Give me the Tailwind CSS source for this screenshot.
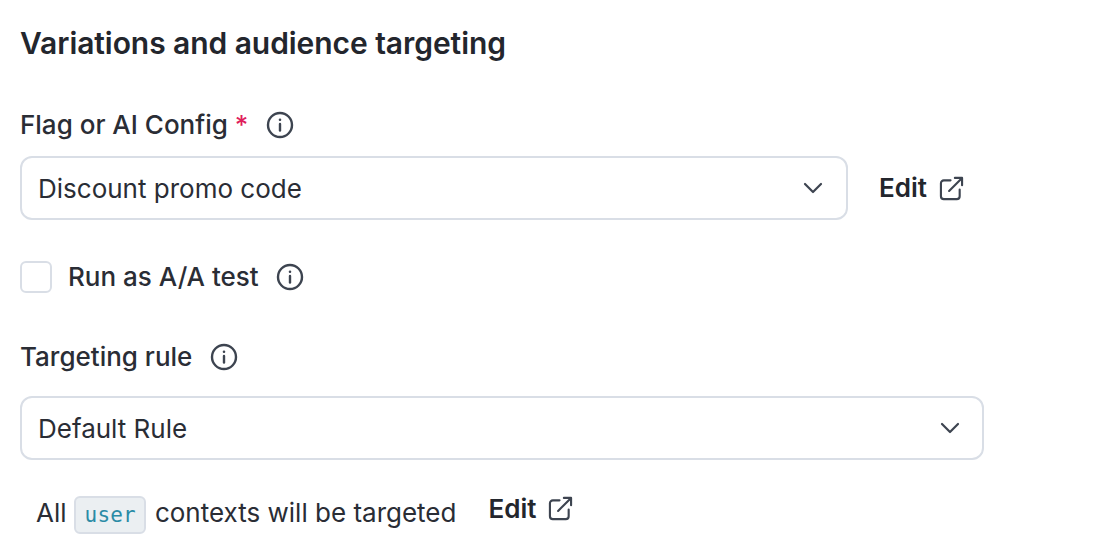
<!DOCTYPE html>
<html><head><meta charset="utf-8"><script src="https://cdn.jsdelivr.net/npm/@tailwindcss/browser@4"></script></head>
<body class="bg-white">
<div class="w-[1106px] h-[548px] overflow-hidden pl-[20px] pt-[23px] font-['Inter',sans-serif] text-[#2a2d35] text-[26px] leading-[40px]">
  <h2 class="text-[30px] font-semibold leading-[40px] tracking-[-0.06px] text-[#23262d]">Variations and audience targeting</h2>
  <div class="mt-[42px] flex items-center h-[40px]">
    <span class="font-[450]">Flag or AI Config</span>
    <span class="text-[#df1f5c] ml-[7px] font-medium">*</span>
    <svg class="ml-[18px]" width="28" height="28" viewBox="0 0 28 28" fill="none" stroke="#3d4450" stroke-width="2.4" stroke-linecap="round"><circle cx="14" cy="14" r="12"/><path d="M14 13v6.500"/><circle cx="14" cy="8.800" r="0.600" fill="#3d4450" stroke-width="1.400"/></svg>
  </div>
  <div class="mt-[11px] flex items-center">
    <div class="w-[828px] h-[64px] border-2 border-[#d9dee6] rounded-[12px] flex items-center justify-between pl-[16px] pr-[23px]">
      <span class="mt-[2px]">Discount promo code</span>
      <svg width="20" height="12" viewBox="0 0 20 12" fill="none" stroke="#3d4450" stroke-width="2.2" stroke-linecap="round" stroke-linejoin="round"><path d="M2 2l8 8 8-8"/></svg>
    </div>
    <span class="ml-[31px] font-semibold text-[#23262d]">Edit</span>
    <svg class="ml-[12px]" width="25" height="25" viewBox="0 0 26 26" fill="none" stroke="#3d4450" stroke-width="2.2" stroke-linecap="round" stroke-linejoin="round"><path d="M12 4.500H5a3 3 0 0 0-3 3V21a3 3 0 0 0 3 3h13.500a3 3 0 0 0 3-3v-7"/><path d="M10.500 15.500L24 2M16.500 2H24v7.500"/></svg>
  </div>
  <div class="mt-[40px] flex items-center h-[34px]">
    <span class="w-[32px] h-[32px] border-2 border-[#d9dee6] rounded-[6px]"></span>
    <span class="ml-[16px] font-[450]">Run as A/A test</span>
    <svg class="ml-[17px]" width="28" height="28" viewBox="0 0 28 28" fill="none" stroke="#3d4450" stroke-width="2.4" stroke-linecap="round"><circle cx="14" cy="14" r="12"/><path d="M14 13v6.500"/><circle cx="14" cy="8.800" r="0.600" fill="#3d4450" stroke-width="1.400"/></svg>
  </div>
  <div class="mt-[43px] flex items-center h-[40px]">
    <span class="font-[450]">Targeting rule</span>
    <svg class="ml-[18px]" width="28" height="28" viewBox="0 0 28 28" fill="none" stroke="#3d4450" stroke-width="2.4" stroke-linecap="round"><circle cx="14" cy="14" r="12"/><path d="M14 13v6.500"/><circle cx="14" cy="8.800" r="0.600" fill="#3d4450" stroke-width="1.400"/></svg>
  </div>
  <div class="mt-[19px] w-[964px] h-[64px] border-2 border-[#d9dee6] rounded-[12px] flex items-center justify-between pl-[16px] pr-[22px]">
    <span class="mt-[2px]">Default Rule</span>
    <svg width="20" height="12" viewBox="0 0 20 12" fill="none" stroke="#3d4450" stroke-width="2.2" stroke-linecap="round" stroke-linejoin="round"><path d="M2 2l8 8 8-8"/></svg>
  </div>
  <div class="mt-[33px] ml-[16px] flex items-center h-[40px]">
    <span>All</span>
    <code class="ml-[7px] h-[38px] pl-[9px] pr-[8px] translate-y-[2px] bg-[#ebeff2] border-2 border-[#d9dee6] rounded-[6px] text-[#2a8ba6] font-['DejaVu_Sans_Mono',monospace] text-[21px] leading-[34px] tracking-[0.2px]">user</code>
    <span class="ml-[9px]">contexts will be targeted</span>
    <span class="ml-[32px] font-semibold -translate-y-[4px] text-[#23262d]">Edit</span>
    <svg class="ml-[12px] -translate-y-[5px]" width="25" height="25" viewBox="0 0 26 26" fill="none" stroke="#3d4450" stroke-width="2.2" stroke-linecap="round" stroke-linejoin="round"><path d="M12 4.500H5a3 3 0 0 0-3 3V21a3 3 0 0 0 3 3h13.500a3 3 0 0 0 3-3v-7"/><path d="M10.500 15.500L24 2M16.500 2H24v7.500"/></svg>
  </div>
</div>
</body></html>
